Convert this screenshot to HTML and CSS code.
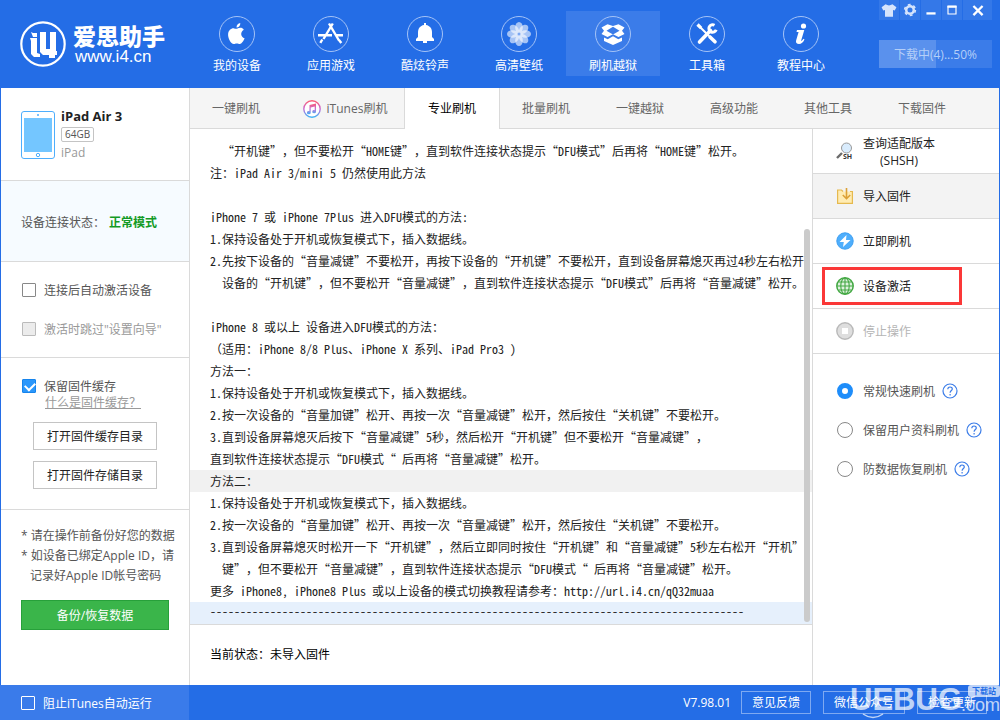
FILE: index.html
```html
<!DOCTYPE html>
<html lang="zh-CN">
<head>
<meta charset="utf-8">
<title>爱思助手</title>
<link rel="stylesheet" href="styles.css">
</head>
<body>
<header class="header">
  <div class="brand">
    <svg class="brand-mark" viewBox="0 0 46 46" aria-hidden="true">
      <circle cx="23" cy="23" r="21.7" fill="none" stroke="#fff" stroke-width="2.2"/>
      <path fill="#fff" d="M11 11l2 1h4v4h-4zM10 17h7v15l3 1v3h-6l-3-3V20zM20 11h6v17h4V11h6v19h1v4h-2v3h-6v-3h-6l-3-3z"/>
    </svg>
    <div class="brand-text">
      <h1 class="brand-name">爱思助手</h1>
      <span class="brand-url">www.i4.cn</span>
    </div>
  </div>
  <nav class="nav">
    <a class="nav-item" href="#device">
      <svg viewBox="0 0 36 36" aria-hidden="true"><circle class="ring" cx="18" cy="18" r="17.5"/><path fill="#fff" d="M18 12.7c2-.8 5-1.800 6.800 1-4 2.500-3 7.300.8 8.600-1 2.700-3 5.700-4.800 5.700-1.200 0-1.600-.6-3-.6s-1.900.6-3 .6c-3 0-6-5.800-5.700-10 .3-3.600 3.200-6 6-5.600 1.200.1 2 .7 2.900.3zM17.500 11.500c0-2.600 1.500-4.200 3.800-4.600.2 2.600-1.500 4.600-3.800 4.600z"/></svg>
      <span>我的设备</span></a>
    <a class="nav-item" href="#apps">
      <svg viewBox="0 0 36 36" aria-hidden="true"><circle class="ring" cx="18" cy="18" r="17.500"/><g stroke="#fff" stroke-width="2.400" fill="none"><path d="M19.800 7.500L10.500 23M16 7.500l10 17M5 19.200h14M23.500 19.200H30M9.300 23.500l-2 3.300M26 24l2.300 3"/></g></svg>
      <span>应用游戏</span></a>
    <a class="nav-item" href="#ringtones">
      <svg viewBox="0 0 36 36" aria-hidden="true"><circle class="ring" cx="18" cy="18" r="17.500"/><path fill="#fff" d="M17 7h2v2c4 .7 6 3.500 6 7.500V21l2 2v2H20v2h-4v-2H9v-2l2-2v-4.500c0-4 2-6.800 6-7.500z"/></svg>
      <span>酷炫铃声</span></a>
    <a class="nav-item" href="#wallpaper">
      <svg viewBox="0 0 36 36" aria-hidden="true"><circle class="ring" cx="18" cy="18" r="17.500"/><g fill="#fff" fill-opacity=".6"><ellipse cx="18" cy="11.500" rx="3.800" ry="5.500"/><ellipse cx="18" cy="24.500" rx="3.800" ry="5.500"/><ellipse cx="11.500" cy="18" rx="5.500" ry="3.800"/><ellipse cx="24.500" cy="18" rx="5.500" ry="3.800"/><g transform="rotate(45 18 18)"><ellipse cx="18" cy="11.500" rx="3.800" ry="5.500"/><ellipse cx="18" cy="24.500" rx="3.800" ry="5.500"/><ellipse cx="11.500" cy="18" rx="5.500" ry="3.800"/><ellipse cx="24.500" cy="18" rx="5.500" ry="3.800"/></g></g><circle cx="18" cy="18" r="1.300" fill="#7ba7f3"/></svg>
      <span>高清壁纸</span></a>
    <a class="nav-item nav-item-active" href="#flash">
      <svg viewBox="0 0 36 36" aria-hidden="true"><circle class="ring" cx="18" cy="18" r="17.500"/><path fill="#fff" fill-rule="evenodd" d="M12.500 8.300l5.500 1.700 5.500-1.700 6 3.200-2.500 3.300 2.500 3.200-6 3-5.500-2.700-5.500 2.700-6-3 2.500-3.200-2.500-3.300zM18 10.800l-6.500 4 6.500 3.800 6.500-3.800zM9 21.500l3.700 1.800 5.300-3 5.300 3 3.700-1.800V25l-9 4-9-4z"/></svg>
      <span>刷机越狱</span></a>
    <a class="nav-item" href="#tools">
      <svg viewBox="0 0 36 36" aria-hidden="true"><circle class="ring" cx="18" cy="18" r="17.500"/><g stroke="#fff" fill="none"><path stroke-width="3.600" stroke-linecap="round" d="M21.500 14.500L10.500 26M21 21l5 4.800"/><path stroke-width="2" d="M10 10l10 10"/><path stroke-width="3.200" d="M8.500 8.500l3.700 3.700"/><path stroke-width="3" d="M25.500 9.200a3.800 3.800 0 1 0 1.700 4.600"/></g></svg>
      <span>工具箱</span></a>
    <a class="nav-item" href="#help">
      <svg viewBox="0 0 36 36" aria-hidden="true"><circle class="ring" cx="18" cy="18" r="17.500"/><circle cx="20.500" cy="10" r="2.600" fill="#fff"/><path fill="#fff" d="M14 14h7.300l-3.300 11c.9 0 1.700-1 2.500-2.200l1 .7c-1.400 2.900-3 4.500-5.500 4.500-2.400 0-3.400-1.400-2.900-3.400l2.500-8.600H13.500z"/></svg>
      <span>教程中心</span></a>
  </nav>
  <div class="window-tools">
    <div class="window-buttons">
      <button type="button" aria-label="皮肤"><svg viewBox="0 0 14 14"><path fill="#d6e4fc" d="M4 2q3 2 6 0l3.500 2.500-1.500 3-1.500-.5V13h-7V7L2 7.500l-1.500-3z"/></svg></button>
      <button type="button" aria-label="设置"><svg viewBox="0 0 14 14"><circle cx="7" cy="7" r="3.300" fill="none" stroke="#d6e4fc" stroke-width="2.200"/><circle cx="7" cy="7" r="4.700" fill="none" stroke="#d6e4fc" stroke-width="1.400" stroke-dasharray="2.460 2.460"/></svg></button>
      <button type="button" aria-label="最小化"><svg viewBox="0 0 14 14"><path d="M3 10h8" stroke="#fff" stroke-width="2"/></svg></button>
      <button type="button" aria-label="最大化"><svg viewBox="0 0 14 14"><path d="M3.500 4v6.500h7V4z" stroke="#fff" fill="none"/><path d="M3 4h8" stroke="#fff" stroke-width="2"/></svg></button>
      <button type="button" class="close" aria-label="关闭"><svg viewBox="0 0 14 14"><path d="M3 3.500l8 8M11 3.500l-8 8" stroke="#fff" stroke-width="2"/></svg></button>
    </div>
    <button type="button" class="download">下载中(4)...50%</button>
  </div>
</header>

<div class="workspace">
  <aside class="sidebar">
    <section class="device">
      <svg class="device-pic" viewBox="0 0 34 48" aria-hidden="true"><rect x=".5" y=".5" width="33" height="47" rx="2.500" fill="#fff" stroke="#4eaefc"/><path fill="#74c6ff" d="M3 7h28v34H3z"/><circle cx="17" cy="4" r="1" fill="#4eaefc"/><circle cx="17" cy="44" r="1.700" fill="none" stroke="#4eaefc"/></svg>
      <div class="device-info">
        <strong class="device-name">iPad Air 3</strong>
        <span class="capacity">64GB</span>
        <span class="device-kind">iPad</span>
      </div>
    </section>
    <section class="connection">设备连接状态：<strong>正常模式</strong></section>
    <section class="activation">
      <label class="check"><input type="checkbox"><span>连接后自动激活设备</span></label>
      <label class="check check-disabled"><input type="checkbox" disabled><span>激活时跳过"设置向导"</span></label>
    </section>
    <section class="cache">
      <label class="check"><input type="checkbox" checked><span>保留固件缓存</span></label>
      <a class="cache-link" href="#cache">什么是固件缓存？</a>
      <button type="button" class="outline-button">打开固件缓存目录</button>
      <button type="button" class="outline-button">打开固件存储目录</button>
    </section>
    <section class="backup">
      <p class="note">* 请在操作前备份好您的数据</p>
      <p class="note">* 如设备已绑定Apple ID，请记录好Apple ID帐号密码</p>
      <button type="button" class="backup-button">备份/恢复数据</button>
    </section>
  </aside>

  <main class="main">
    <nav class="tabs">
      <a class="tab" href="#onekey">一键刷机</a>
      <a class="tab tab-itunes" href="#itunes"><svg viewBox="0 0 18 18" aria-hidden="true"><defs><linearGradient id="tune" x1="0" y1="0" x2="0" y2="1"><stop offset="0" stop-color="#fb5c74"/><stop offset=".5" stop-color="#c86dd7"/><stop offset="1" stop-color="#3fb4f5"/></linearGradient></defs><circle cx="9" cy="9" r="8.200" fill="#fff" stroke="url(#tune)" stroke-width="1.400"/><path fill="url(#tune)" d="M6.500 5l6.500-1.500v8.200a1.900 1.600 0 1 1-1.300-1.500V6.500l-4 .9v5.300a1.900 1.600 0 1 1-1.300-1.500z"/></svg>iTunes刷机</a>
      <a class="tab tab-active" href="#pro">专业刷机</a>
      <a class="tab" href="#batch">批量刷机</a>
      <a class="tab" href="#jailbreak">一键越狱</a>
      <a class="tab" href="#advanced">高级功能</a>
      <a class="tab" href="#others">其他工具</a>
      <a class="tab" href="#firmware">下载固件</a>
    </nav>
    <div class="panel">
      <div class="center">
        <article class="log">
          <p>  “开机键”<span class="full">，</span>但不要松开“HOME键”<span class="full">，</span>直到软件连接状态提示“DFU模式”后再将“HOME键”松开。</p>
          <p>注：iPad Air 3/mini 5 仍然使用此方法</p>
          <p> </p>
          <p>iPhone 7 或 iPhone 7Plus 进入DFU模式的方法:</p>
          <p>1.保持设备处于开机或恢复模式下<span class="full">，</span>插入数据线。</p>
          <p>2.先按下设备的“音量减键”不要松开<span class="full">，</span>再按下设备的“开机键”不要松开<span class="full">，</span>直到设备屏幕熄灭再过4秒左右松开</p>
          <p>  设备的“开机键”<span class="full">，</span>但不要松开“音量减键”<span class="full">，</span>直到软件连接状态提示“DFU模式”后再将“音量减键”松开。</p>
          <p> </p>
          <p>iPhone 8 或以上 设备进入DFU模式的方法：</p>
          <p><span class="full">（</span>适用：iPhone 8/8 Plus、iPhone X 系列、iPad Pro3 ）</p>
          <p>方法一：</p>
          <p>1.保持设备处于开机或恢复模式下<span class="full">，</span>插入数据线。</p>
          <p>2.按一次设备的“音量加键”松开、再按一次“音量减键”松开<span class="full">，</span>然后按住“关机键”不要松开。</p>
          <p>3.直到设备屏幕熄灭后按下“音量减键”5秒<span class="full">，</span>然后松开“开机键”但不要松开“音量减键”<span class="full">，</span></p>
          <p>直到软件连接状态提示“DFU模式“ 后再将“音量减键”松开。</p>
          <p class="hover">方法二：</p>
          <p>1.保持设备处于开机或恢复模式下<span class="full">，</span>插入数据线。</p>
          <p>2.按一次设备的“音量加键”松开、再按一次“音量减键”松开<span class="full">，</span>然后按住“关机键”不要松开。</p>
          <p>3.直到设备屏幕熄灭时松开一下“开机键”<span class="full">，</span>然后立即同时按住“开机键”和“音量减键”5秒左右松开“开机”</p>
          <p>  键”<span class="full">，</span>但不要松开“音量减键”<span class="full">，</span>直到软件连接状态提示“DFU模式“ 后再将“音量减键”松开。</p>
          <p>更多 iPhone8, iPhone8 Plus 或以上设备的模式切换教程请参考：http://url.i4.cn/qQ32muaa</p>
          <p class="selected">-----------------------------------------------------------------------------------------</p>
          <span class="scroll-thumb"></span>
        </article>
        <div class="state">当前状态：未导入固件</div>
      </div>
      <aside class="actions">
        <button type="button" class="action"><svg viewBox="0 0 18 18" aria-hidden="true"><path stroke="#6b6b6b" stroke-width="2.400" d="M1 16l5-5"/><circle cx="10.500" cy="6" r="5" fill="#d9ecfd" stroke="#999"/><text x="7" y="17" class="sh">SH</text></svg><span>查询适配版本<br>(SHSH)</span></button>
        <button type="button" class="action action-hover"><svg viewBox="0 0 18 18" aria-hidden="true"><path fill="#ffecb3" stroke="#e5b94f" stroke-width="1.200" d="M7 4.500L5.500 3H1.600v13.400h14.800V4.500H14"/><path fill="none" stroke="#dca136" stroke-width="1.600" d="M10.500 1v10M6.800 8l3.700 3.700L14.200 8"/></svg><span>导入固件</span></button>
        <button type="button" class="action"><svg viewBox="0 0 18 18" aria-hidden="true"><circle cx="9" cy="9" r="8.200" fill="#4eaefc" stroke="#3d9ff2"/><path fill="#fff" d="M10.500 3L3.500 10h4.300L7 15l7.500-7h-4.500z"/></svg><span>立即刷机</span></button>
        <button type="button" class="action action-marked"><svg viewBox="0 0 18 18" aria-hidden="true"><g fill="none" stroke="#43a843" stroke-width="1.100"><circle cx="9" cy="9" r="8.200" fill="#dff2df" stroke-width="1.500"/><ellipse cx="9" cy="9" rx="4.200" ry="8"/><path d="M9 1v16M1 9h16M2.500 5h13M2.500 13h13"/></g></svg><span>设备激活</span></button>
        <button type="button" class="action" disabled><svg viewBox="0 0 18 18" aria-hidden="true"><circle cx="9" cy="9" r="8.200" fill="#dedede" stroke="#b9b9b9" stroke-width="1.400"/><path fill="#fff" d="M6 6h6v6H6z"/></svg><span>停止操作</span></button>
        <div class="modes">
          <div class="mode"><label><input type="radio" name="mode" checked><span>常规快速刷机</span></label><button type="button" class="help" aria-label="帮助：常规快速刷机"><svg viewBox="0 0 16 16"><circle cx="8" cy="8" r="7"/><path d="M5.800 6.300c0-3 4.500-3 4.500-.3 0 1.500-2.200 1.700-2.200 3.800M8.100 11v1.400"/></svg></button></div>
          <div class="mode"><label><input type="radio" name="mode"><span>保留用户资料刷机</span></label><button type="button" class="help" aria-label="帮助：保留用户资料刷机"><svg viewBox="0 0 16 16"><circle cx="8" cy="8" r="7"/><path d="M5.800 6.300c0-3 4.500-3 4.500-.3 0 1.500-2.200 1.700-2.200 3.800M8.100 11v1.400"/></svg></button></div>
          <div class="mode"><label><input type="radio" name="mode"><span>防数据恢复刷机</span></label><button type="button" class="help" aria-label="帮助：防数据恢复刷机"><svg viewBox="0 0 16 16"><circle cx="8" cy="8" r="7"/><path d="M5.800 6.300c0-3 4.500-3 4.500-.3 0 1.500-2.200 1.700-2.200 3.800M8.100 11v1.400"/></svg></button></div>
        </div>
      </aside>
    </div>
  </main>
</div>

<footer class="footer">
  <label class="check footer-left"><input type="checkbox"><span>阻止iTunes自动运行</span></label>
  <div class="footer-right">
    <span>V7.98.01</span>
    <button type="button">意见反馈</button>
    <button type="button" class="wide">微信公众号</button>
    <button type="button">检查更新</button>
  </div>
  <div class="mark">
    <span class="mark-name">UEBUG</span>
    <span class="mark-side"><span class="mark-badge">下载站</span><span class="mark-com">.com</span></span>
    <svg class="mark-smile" viewBox="0 0 22 6" aria-hidden="true"><path d="M1 1q10 7 20 0" fill="none" stroke="#fff" stroke-width="1.500"/></svg>
  </div>
</footer>
</body>
</html>
```
FILE: styles.css
```css
* {
  box-sizing: border-box;
}

body {
  margin: 0;
  min-height: 100vh;
  display: flex;
  flex-direction: column;
  background: #246de6;
  color: #555;
  font: 12px/18px "Open Sans", "Noto Sans CJK SC", sans-serif;
}

button {
  margin: 0;
  padding: 0;
  border: 0;
  background: none;
  font: inherit;
  color: inherit;
}

a {
  color: inherit;
  text-decoration: none;
}

p,
h1 {
  margin: 0;
}

svg {
  display: block;
  flex: none;
}

/* Header */
.header {
  display: flex;
  height: 88px;
  color: #fff;
}

.brand {
  display: flex;
  align-items: flex-start;
  gap: 7px;
  width: 190px;
  padding: 21px 0 0 20px;
}

.brand-mark {
  width: 46px;
  height: 46px;
}

.brand-text {
  display: flex;
  flex-direction: column;
}

.brand-name {
  font: 900 23px/28px "Noto Sans CJK SC", sans-serif;
}

.brand-url {
  font: 17px/16px "Liberation Sans", sans-serif;
  padding-left: 2px;
}

.nav {
  display: flex;
  flex: 1;
  padding-top: 11px;
}

.nav-item {
  display: flex;
  flex-direction: column;
  align-items: center;
  gap: 5px;
  width: 94px;
  height: 65px;
  padding-top: 5px;
}

.nav-item svg {
  width: 36px;
  height: 36px;
}

.nav-item-active {
  background: #3b7ce9;
}

.ring {
  fill: none;
  stroke: #a5c3f6;
}

.window-tools {
  display: flex;
  flex-direction: column;
  gap: 20px;
  width: 113px;
  margin-right: 8px;
}

.window-buttons {
  display: flex;
  gap: 1px;
}

.window-buttons button {
  display: grid;
  place-items: center;
  width: 20px;
  height: 20px;
  background: #3478e8;
}

.window-buttons .close {
  flex: 1;
}

.window-buttons svg {
  width: 16px;
  height: 16px;
}

.download {
  height: 28px;
  padding-top: 2px;
  background: linear-gradient(90deg, #5a91ed 50%, #3b7ce9 50%);
  color: #b5cff8;
}

/* Workspace */
.workspace {
  display: flex;
  flex: 1;
  margin: 0 1px;
  background: #fff;
}

.sidebar {
  display: flex;
  flex-direction: column;
  width: 189px;
  border-right: 1px solid #dadada;
}

.sidebar section {
  border-bottom: 1px solid #dadada;
}

.sidebar .backup {
  border-bottom: 0;
}

.device {
  display: flex;
  gap: 6px;
  height: 93px;
  padding: 20px 0 0 20px;
}

.device-pic {
  width: 34px;
  height: 48px;
  margin-top: 3px;
}

.device-info {
  display: flex;
  flex-direction: column;
  align-items: flex-start;
}

.device-name {
  font-size: 13px;
  line-height: 17px;
  color: #222;
}

.capacity {
  height: 15px;
  margin: 2px 0;
  padding: 0 3px;
  border: 1px solid #c4c4c4;
  border-radius: 2px;
  font-size: 10px;
  line-height: 13px;
}

.device-kind {
  color: #999;
}

.connection {
  display: flex;
  align-items: center;
  gap: 4px;
  height: 81px;
  padding: 3px 0 0 20px;
  background: #f6fbff;
}

.connection strong {
  color: #139a25;
}

.check {
  display: flex;
  align-items: center;
  gap: 8px;
}

.check span,
.mode span {
  padding-top: 2px;
  line-height: 16px;
}

.check input {
  appearance: none;
  width: 14px;
  height: 14px;
  margin: 0;
  border: 1px solid #888;
  border-radius: 1px;
}

.check input:checked {
  border-color: #1684ec;
  background: #2b97fb;
}

.check input:checked::before {
  content: "";
  display: block;
  width: 8px;
  height: 5px;
  margin: 3px 2px;
  border: solid #fff;
  border-width: 0 0 2px 2px;
  transform: translateY(-1px) rotate(-45deg);
}

.check input:disabled {
  border-color: #bbb;
  background: #ececec;
}

.check-disabled {
  color: #999;
}

.activation {
  display: flex;
  flex-direction: column;
  gap: 21px;
  padding: 19px 0 19px 21px;
}

.cache {
  display: flex;
  flex-direction: column;
  align-items: flex-start;
  padding: 19px 0 20px 21px;
}

.cache-link {
  margin: -1px 0 10px 23px;
  color: #999;
  text-decoration: underline;
}

.outline-button {
  width: 124px;
  height: 28px;
  margin-left: 11px;
  padding-top: 2px;
  border: 1px solid #c4c4c4;
  color: #222;
}

.outline-button + .outline-button {
  margin-top: 11px;
}

.backup {
  padding: 16px 10px 0 20px;
}

.note {
  padding-left: 9px;
  line-height: 20px;
  text-indent: -9px;
}

.backup-button {
  width: 148px;
  height: 30px;
  margin-top: 14px;
  padding-top: 2px;
  border: 1px solid #27a03a;
  background: #3ab54a;
  color: #fff;
}

/* Tabs */
.main {
  display: flex;
  flex: 1;
  flex-direction: column;
  min-width: 0;
}

.tabs {
  display: flex;
  height: 41px;
  border-bottom: 1px solid #dadada;
  background: #f5f5f5;
  color: #666;
}

.tab {
  display: flex;
  align-items: center;
  justify-content: center;
  gap: 6px;
  width: 94px;
  padding: 2px 2px 0 0;
}

.tab-itunes {
  width: 120px;
  padding-left: 4px;
}

.tab-itunes svg {
  width: 18px;
  height: 18px;
}

.tab-active {
  width: 96px;
  margin-bottom: -1px;
  padding: 0;
  border: solid #dadada;
  border-width: 0 1px;
  background: #fff;
  color: #000;
}

.panel {
  display: flex;
  flex: 1;
}

.center {
  display: flex;
  flex: 1;
  flex-direction: column;
  min-width: 0;
}

.log {
  position: relative;
  padding-top: 11px;
  overflow: hidden;
  border-bottom: 1px solid #dadada;
  color: #222;
  font-family: "Noto Sans CJK SC", sans-serif;
  font-feature-settings: "hwid";
}

.log p {
  height: 22px;
  padding-left: 20px;
  line-height: 22px;
  white-space: pre;
}

.full {
  font-feature-settings: normal;
}

.log .hover {
  background: #f1f1f1;
}

.log .selected {
  background: #e6f0fc;
  line-height: 18px;
}

.scroll-thumb {
  position: absolute;
  top: 100px;
  right: 2px;
  bottom: 2px;
  width: 6px;
  border-radius: 3px;
  background: #cbcbcb;
}

.state {
  display: flex;
  flex: 1;
  align-items: center;
  min-height: 60px;
  padding-left: 20px;
  color: #000;
}

/* Actions */
.actions {
  width: 187px;
  border-left: 1px solid #dadada;
}

.action {
  display: flex;
  align-items: center;
  gap: 9px;
  width: 100%;
  height: 45px;
  padding-left: 23px;
  border-bottom: 1px solid #dadada;
  color: #222;
  line-height: 17px;
}

.action span {
  padding-top: 1px;
}

.action svg {
  width: 18px;
  height: 18px;
}

.action:disabled {
  color: #b5b5b5;
}

.action-hover {
  background: #f3f3f3;
}

.action-marked {
  position: relative;
}

.action-marked::after {
  content: "";
  position: absolute;
  inset: 3px 37px 3px 9px;
  border: 3px solid #fb3838;
}

.sh {
  font: bold 7px "Open Sans", sans-serif;
  fill: #333;
}

.modes {
  display: flex;
  flex-direction: column;
  gap: 21px;
  padding: 28px 0 0 24px;
}

.mode,
.mode label {
  display: flex;
  align-items: center;
}

.mode {
  gap: 7px;
}

.mode label {
  gap: 10px;
}

.mode input {
  appearance: none;
  width: 16px;
  height: 16px;
  margin: 0;
  border: 1px solid #888;
  border-radius: 50%;
}

.mode input:checked {
  border: 5px solid #1e8dfa;
}

.help svg {
  width: 16px;
  height: 16px;
  fill: none;
  stroke: #3c7de8;
  stroke-width: 1.2;
}

/* Footer */
.footer {
  position: relative;
  display: flex;
  height: 35px;
  color: #fff;
}

.footer-left {
  width: 189px;
  padding-left: 21px;
  background: #3a7bea;
}

.footer-left input {
  border-color: #fff;
}

.footer-right {
  display: flex;
  flex: 1;
  align-items: center;
  justify-content: flex-end;
  gap: 12px;
  padding-right: 13px;
}

.footer-right span {
  margin-right: -2px;
}

.footer-right button {
  width: 70px;
  height: 23px;
  border: 1px solid #7ea9f1;
}

.footer-right .wide {
  width: 82px;
}

.mark {
  position: absolute;
  top: 0;
  right: 0;
  display: flex;
  height: 35px;
  opacity: 0.7;
  pointer-events: none;
}

.mark-name {
  font: bold 31px/30px "Liberation Sans", sans-serif;
}

.mark-side {
  display: flex;
  flex-direction: column;
  align-items: flex-end;
  width: 38px;
}

.mark-badge {
  padding: 0 4px;
  border-radius: 3px;
  background: #fff;
  color: #246de6;
  font: bold 8px/12px "Noto Sans CJK SC", sans-serif;
}

.mark-com {
  font: 18px/16px "Liberation Sans", sans-serif;
}

.mark-smile {
  position: absolute;
  bottom: 1px;
  left: 12px;
  width: 22px;
  height: 6px;
}
```
